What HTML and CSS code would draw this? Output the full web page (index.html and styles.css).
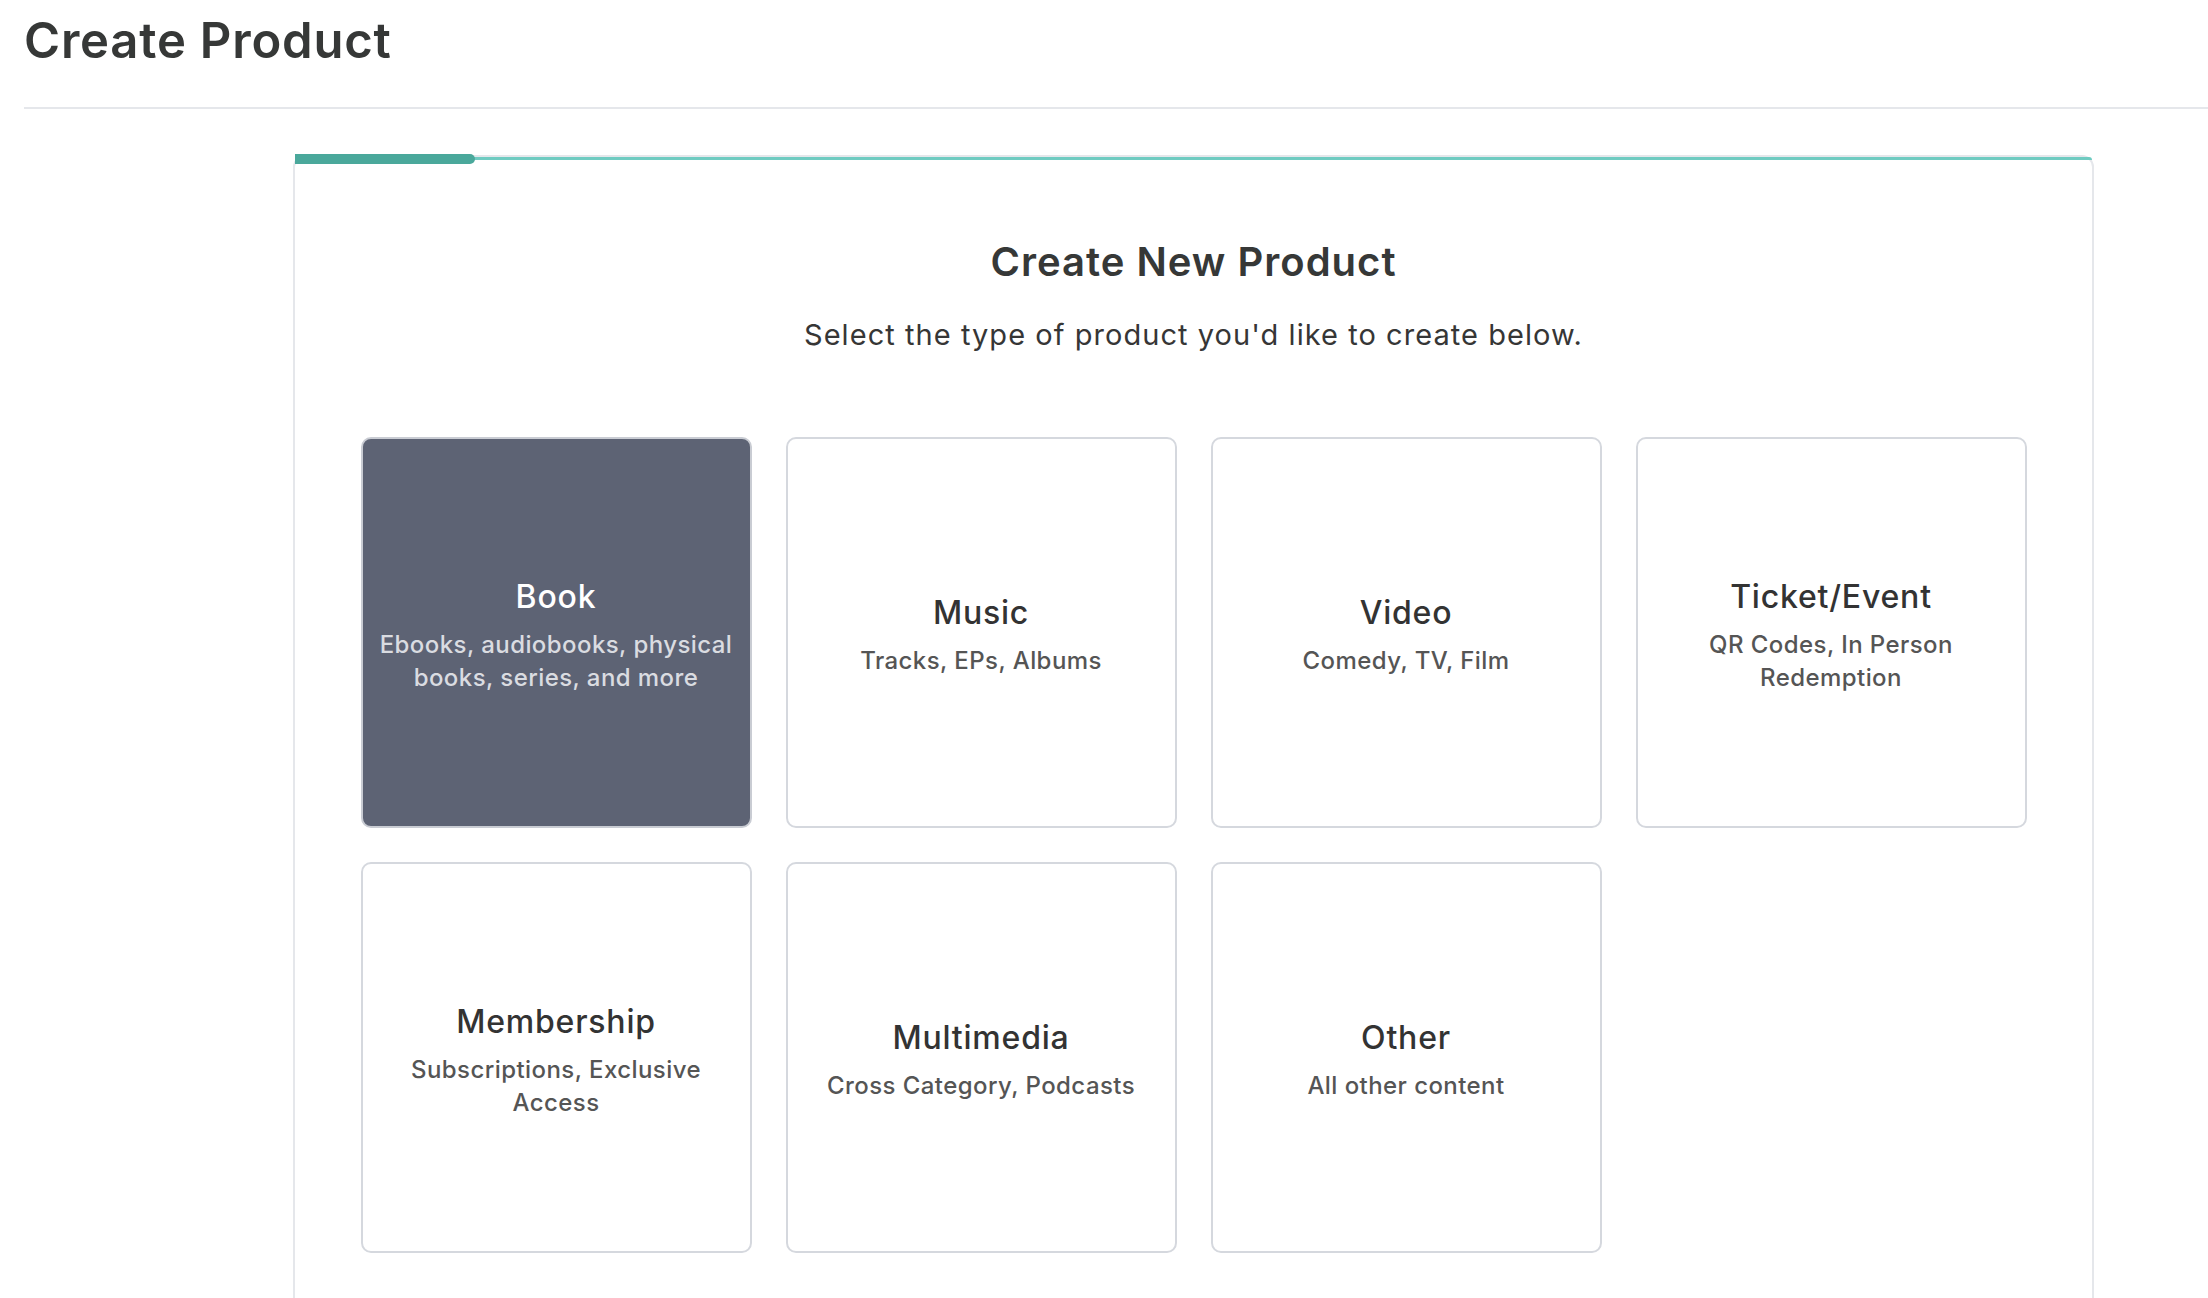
FILE: index.html
```html
<!DOCTYPE html>
<html lang="en">

<head>
    <meta charset="UTF-8">
    <meta name="viewport" content="width=device-width, initial-scale=1.0">
    <title>Create Product</title>
    <link rel="stylesheet" href="styles.css">
</head>

<body>
    <div class="page-header">
        <h1>Create Product</h1>
    </div>

    <div class="wizard">
        <div class="wizard-progress">
            <div class="wizard-progress-fill"></div>
        </div>

        <h2 class="wizard-title">Create New Product</h2>
        <p class="wizard-subtitle">Select the type of product you'd like to create below.</p>

        <div class="type-grid">
            <div class="type-card selected">
                <div class="type-name">Book</div>
                <div class="type-desc">Ebooks, audiobooks, physical books, series, and more</div>
            </div>
            <div class="type-card">
                <div class="type-name">Music</div>
                <div class="type-desc">Tracks, EPs, Albums</div>
            </div>
            <div class="type-card">
                <div class="type-name">Video</div>
                <div class="type-desc">Comedy, TV, Film</div>
            </div>
            <div class="type-card">
                <div class="type-name">Ticket/Event</div>
                <div class="type-desc">QR Codes, In Person Redemption</div>
            </div>
            <div class="type-card">
                <div class="type-name">Membership</div>
                <div class="type-desc">Subscriptions, Exclusive Access</div>
            </div>
            <div class="type-card">
                <div class="type-name">Multimedia</div>
                <div class="type-desc">Cross Category, Podcasts</div>
            </div>
            <div class="type-card">
                <div class="type-name">Other</div>
                <div class="type-desc">All other content</div>
            </div>
        </div>
    </div>
</body>

</html>
```

FILE: styles.css
```css
body {
    margin: 0;
    font-family: "Inter", "Noto Sans", sans-serif;
    color: #363636;
    background-color: #fff;
}

.page-header {
    margin-left: 24px;
    padding-top: 12px;
    padding-bottom: 37px;
    border-bottom: 2px solid #e5e7eb;
}

.page-header h1 {
    margin: 0;
    font-size: 49px;
    line-height: 58px;
    font-weight: 600;
    letter-spacing: 0.8px;
    color: #363837;
}

.wizard {
    margin: 46px 114px 0 293px;
    border: 2px solid #e5e7eb;
    border-radius: 12px;
    padding-bottom: 66px;
    text-align: center;
}

.wizard-progress {
    position: relative;
    height: 3px;
    background-color: #6fcbc1;
    border-radius: 10px 10px 0 0;
}

.wizard-progress-fill {
    position: absolute;
    left: 0;
    top: -3px;
    width: 180px;
    height: 10px;
    background-color: #4aa89b;
    border-radius: 0 5px 5px 0;
}

.wizard-title {
    margin: 78px 0 0;
    font-size: 40px;
    line-height: 48px;
    font-weight: 600;
    letter-spacing: 1px;
    color: #363837;
}

.wizard-subtitle {
    margin: 32px 0 0;
    font-size: 29px;
    line-height: 34px;
    letter-spacing: 1.05px;
    color: #363636;
}

.type-grid {
    display: grid;
    grid-template-columns: repeat(4, 391px);
    gap: 34px;
    justify-content: center;
    margin-top: 85px;
}

.type-card {
    height: 391px;
    box-sizing: border-box;
    padding: 7px 10px 0;
    border: 2px solid #d5d8de;
    border-radius: 10px;
    display: flex;
    flex-direction: column;
    justify-content: center;
    align-items: center;
    cursor: pointer;
}

.type-card.selected {
    background-color: #5d6374;
    border-color: #c9ccd3;
}

.type-name {
    font-size: 32px;
    line-height: 36px;
    font-weight: 500;
    letter-spacing: 0.8px;
    color: #333;
    margin-bottom: 13px;
}

.type-desc {
    font-size: 24px;
    line-height: 33px;
    font-weight: 500;
    letter-spacing: 0.43px;
    color: #555;
    max-width: 365px;
}

.type-card.selected .type-name {
    color: #fff;
}

.type-card.selected .type-desc {
    color: #dadce1;
}
```
